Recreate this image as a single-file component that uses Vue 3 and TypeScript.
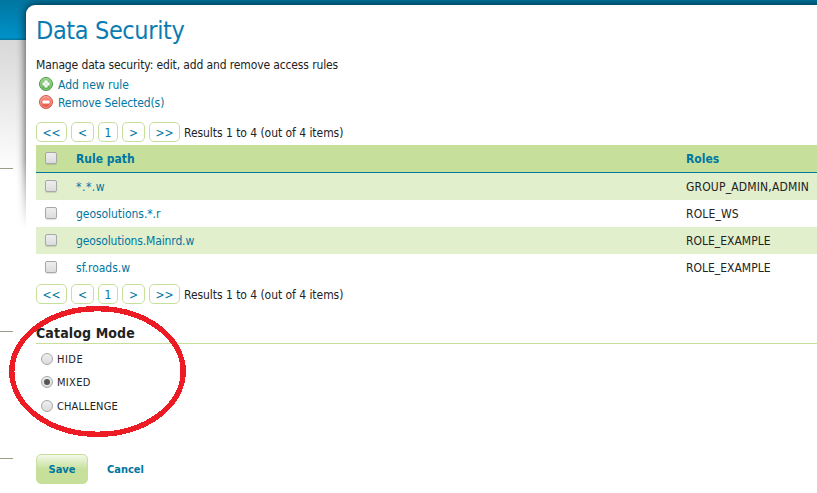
<script setup lang="ts">
import { ref } from 'vue'

interface Rule {
  path: string
  roles: string
  cls: string
}

const rules: Rule[] = [
  { path: '*.*.w', roles: 'GROUP_ADMIN,ADMIN', cls: 'r1' },
  { path: 'geosolutions.*.r', roles: 'ROLE_WS', cls: 'r2' },
  { path: 'geosolutions.Mainrd.w', roles: 'ROLE_EXAMPLE', cls: 'r3' },
  { path: 'sf.roads.w', roles: 'ROLE_EXAMPLE', cls: 'r4' },
]
const pages = [
  { label: '<<', cls: 'first' },
  { label: '<', cls: 'prev' },
  { label: '1', cls: 'current' },
  { label: '>', cls: 'next' },
  { label: '>>', cls: 'last' },
]
const modes = ['HIDE', 'MIXED', 'CHALLENGE']
const mode = ref('MIXED')
</script>

<template>
  <div class="page">
    <aside class="side">
      <div class="rule a"></div>
      <div class="rule b"></div>
      <div class="rule c"></div>
    </aside>
    <div class="shade"></div>
    <main class="card">
      <h1><span>Data Security</span></h1>
      <p class="intro"><span>Manage data security: edit, add and remove access rules</span></p>
      <a class="action add">
        <svg width="16" height="16" viewBox="0 0 16 16">
          <defs>
            <linearGradient id="green" x1="0" y1="0" x2="0" y2="1">
              <stop offset="0" stop-color="#9ad48b" />
              <stop offset="1" stop-color="#4ba63c" />
            </linearGradient>
          </defs>
          <circle cx="8" cy="8" r="6.5" fill="url(#green)" stroke="#4c9a42" />
          <circle cx="8" cy="8" r="5.4" fill="none" stroke="#a9d9a0" stroke-width=".7" />
          <path d="M6.5 4.500h3v2h2v3h-2v2h-3v-2h-2v-3h2z" fill="#fff" />
          <path d="M7.5 6.500h1v1h1v1h-1v1h-1v-1h-1v-1h1z" fill="#c9e8c2" />
        </svg>
        <span>Add new rule</span>
      </a>
      <a class="action remove">
        <svg width="16" height="16" viewBox="0 0 16 16">
          <defs>
            <linearGradient id="red" x1="0" y1="0" x2="0" y2="1">
              <stop offset="0" stop-color="#f89a8d" />
              <stop offset="1" stop-color="#e34a3c" />
            </linearGradient>
          </defs>
          <circle cx="8" cy="8" r="6.5" fill="url(#red)" stroke="#d55b50" />
          <circle cx="8" cy="8" r="5.4" fill="none" stroke="#f7aaa0" stroke-width=".7" />
          <rect x="4.5" y="6.5" width="7" height="3" rx=".5" fill="#fff" />
        </svg>
        <span>Remove Selected(s)</span>
      </a>

      <div class="pager top">
        <a v-for="p in pages" :key="p.cls" :class="p.cls">{{ p.label }}</a>
        <span>Results 1 to 4 (out of 4 items)</span>
      </div>

      <div class="table">
        <div class="row head">
          <i class="check"></i><b class="path"><span>Rule path</span></b><b class="roles"><span>Roles</span></b>
        </div>
        <div v-for="r in rules" :key="r.path" class="row" :class="r.cls">
          <i class="check"></i>
          <a class="path"><span>{{ r.path }}</span></a>
          <div class="roles"><span>{{ r.roles }}</span></div>
        </div>
      </div>

      <div class="pager bottom">
        <a v-for="p in pages" :key="p.cls" :class="p.cls">{{ p.label }}</a>
        <span>Results 1 to 4 (out of 4 items)</span>
      </div>

      <h2><span>Catalog Mode</span></h2>
      <div class="modes">
        <div v-for="m in modes" :key="m" class="mode" :class="m.toLowerCase()" @click="mode = m">
          <i class="radio" :class="{ on: mode === m }"></i><span>{{ m }}</span>
        </div>
      </div>
      <div class="buttons">
        <a class="save"><span>Save</span></a>
        <a class="cancel"><span>Cancel</span></a>
      </div>
    </main>
    <svg class="mark" width="180" height="136" viewBox="0 0 180 136" shape-rendering="crispEdges">
      <ellipse cx="89.5" cy="65.5" rx="85.7" ry="62.8" fill="none" stroke="#ed1c24" stroke-width="5.4" />
    </svg>
  </div>
</template>

<style>
body {
  overflow: hidden;
}
</style>

<style scoped>
.page {
  position: relative;
  box-sizing: border-box;
  width: 817px;
  height: 493px;
  padding-top: 5px;
  display: flex;
  overflow: hidden;
  font-family: 'DejaVu Sans Condensed', 'DejaVu Sans', sans-serif;
  font-stretch: condensed;
  font-size: 12px;
  color: #222;
  background:
    linear-gradient(#0076a1, #0092c8 38px, #0079a5 39px, #0079a5 40px) 0 0 / 100% 40px no-repeat,
    linear-gradient(#d8d8d8, #fff 135px) 0 40px / 100% 100% no-repeat;
}
.side {
  width: 26px;
  flex: none;
}
.rule {
  width: 13px;
  height: 1px;
  background: #999f87;
}
.a { margin-top: 163px; }
.b { margin-top: 162px; }
.c { margin-top: 126px; }
.shade {
  position: absolute;
  left: 14px;
  top: 0;
  width: 803px;
  height: 228px;
  overflow: hidden;
  -webkit-mask-image: linear-gradient(#000 160px, transparent 228px);
  mask-image: linear-gradient(#000 160px, transparent 228px);
}
.shade::before {
  content: '';
  display: block;
  width: 900px;
  height: 400px;
  margin: 5px 0 0 12px;
  border-radius: 9px;
  box-shadow: 0 0 10px rgba(0, 0, 0, 0.75);
}
.card {
  position: relative;
  flex: 1;
  min-width: 0;
  box-sizing: border-box;
  padding-left: 10px;
  background: #fff;
  border-top-left-radius: 9px;
}
h1, h2, p { margin: 0; }
span, .pager a { white-space: nowrap; }
h1 {
  height: 50px;
  line-height: 51px;
  font-size: 25px;
  font-weight: 400;
  color: #0a7cb2;
  letter-spacing: -0.37px;
}
.intro {
  height: 20px;
  line-height: 20px;
  letter-spacing: -0.13px;
}
.action {
  display: flex;
  align-items: center;
  height: 18px;
  padding-left: 2px;
  gap: 4px;
  color: #0076a1;
}
.action span { padding-top: 2px; }
.remove { letter-spacing: -0.1px; }
.pager {
  display: flex;
  align-items: center;
  height: 20px;
}
.pager span {
  padding-top: 2px;
  letter-spacing: -0.05px;
}
.top { margin-top: 11px; }
.bottom { margin-top: 3px; }
.pager a {
  box-sizing: border-box;
  height: 20px;
  line-height: 20px;
  border: 1px solid #c6e09b;
  border-radius: 5px;
  text-align: center;
  color: #0076a1;
  margin-right: 4px;
}
.first, .last { width: 31px; }
.prev, .next { width: 23px; }
.current { width: 20px; }
.table { margin-top: 3px; }
.row {
  box-sizing: border-box;
  display: flex;
  align-items: flex-start;
  height: 27px;
  padding-top: 7px;
  line-height: 14px;
}
.row:nth-child(even) { background: #e1efcd; }
.head {
  height: 28px;
  background: #c6e09b;
  border-bottom: 1px solid #0076a1;
  color: #0076a1;
}
.r1 .path { letter-spacing: 0.55px; }
.r2 .path { letter-spacing: -0.05px; }
.r3 .path { letter-spacing: -0.14px; }
.r1 .roles { letter-spacing: 0.17px; }
.r2 .roles { letter-spacing: 0.15px; }
.check {
  box-sizing: border-box;
  width: 12px;
  height: 12px;
  margin: 0 19px 0 9px;
  border: 1px solid #a8a8a8;
  border-radius: 2px;
  background: linear-gradient(#eee, #dcdcdc);
  box-shadow: 0 1px 1px rgba(0, 0, 0, 0.12);
}
.path { width: 610px; color: #0076a1; }
h2 {
  box-sizing: border-box;
  height: 27px;
  margin: 13px 0 3px;
  padding-top: 4px;
  font-size: 14px;
  line-height: 24px;
  letter-spacing: 0.13px;
  border-bottom: 1px solid #c6e09b;
}
.modes { height: 107px; }
.mode {
  display: flex;
  align-items: center;
  height: 23.5px;
  padding-left: 5px;
  font-size: 11px;
  gap: 4px;
  letter-spacing: 0.12px;
}
.mode span { padding-top: 1px; }
.hide { letter-spacing: 0.5px; }
.mixed { letter-spacing: 0.3px; }
.radio {
  box-sizing: border-box;
  display: flex;
  align-items: center;
  justify-content: center;
  width: 12px;
  height: 12px;
  border: 1px solid #a8a8a8;
  border-radius: 50%;
  background: linear-gradient(#eee, #dcdcdc);
}
.radio.on::after {
  content: '';
  width: 6px;
  height: 6px;
  border-radius: 50%;
  background: #555;
}
.buttons {
  display: flex;
  align-items: center;
  height: 30px;
  gap: 19px;
  font-size: 11px;
  font-weight: 700;
  color: #0076a1;
}
.cancel { padding-top: 1px; }
.save {
  box-sizing: border-box;
  width: 52px;
  height: 30px;
  line-height: 29px;
  text-align: center;
  border: 1px solid #c6e09b;
  border-radius: 5px;
  background: linear-gradient(#f4f9eb, #c6e09b 50%);
}
.mark {
  position: absolute;
  left: 8px;
  top: 306px;
}
</style>
